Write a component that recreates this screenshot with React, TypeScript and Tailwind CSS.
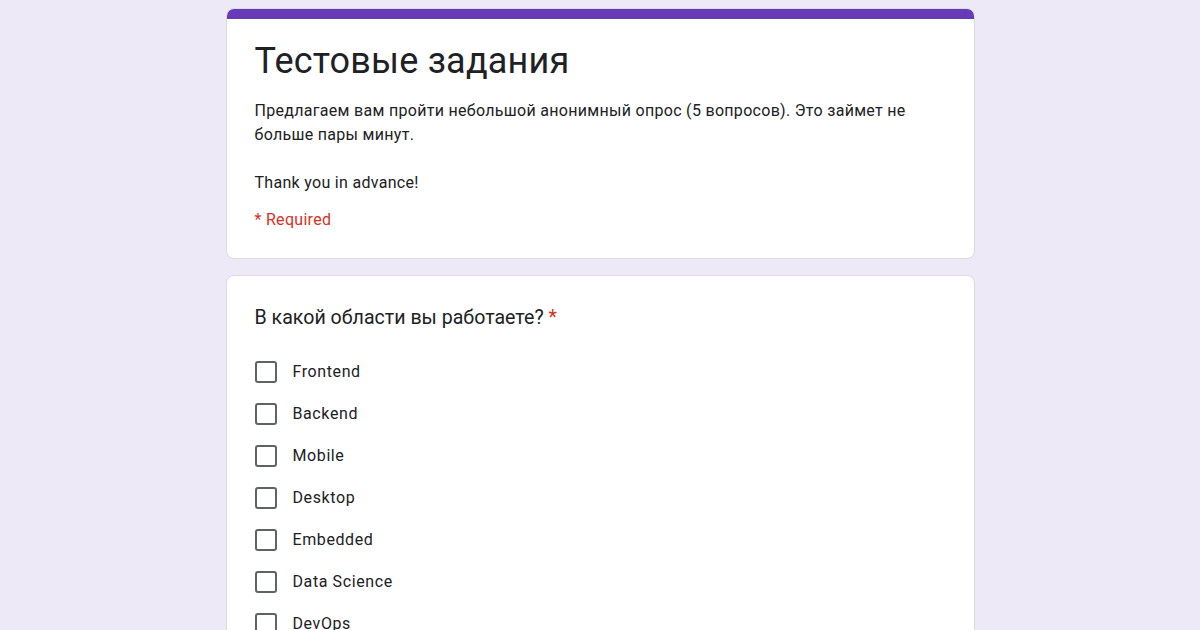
import { useState } from 'react';

const options = ['Frontend', 'Backend', 'Mobile', 'Desktop', 'Embedded', 'Data Science', 'DevOps'];

export default function App() {
  const [checked, setChecked] = useState<Record<string, boolean>>({});

  return (
    <div className="h-[630px] overflow-hidden bg-[#ede9f7] font-['Roboto',sans-serif]">
      <div className="w-[749px] mx-auto pt-[8px] flex flex-col gap-[16px]">
        {/* Header card */}
        <div className="bg-white rounded-[8px] border border-[#dadce0] overflow-hidden">
          <div className="h-[10px] bg-[#673ab7]" />
          <div className="pl-[28px] pr-[24px] pt-[20px] pb-[26px]">
            <h1 className="text-[36px] leading-[44px] text-[#202124] tracking-[0.2px] font-normal">
              Тестовые задания
            </h1>
            <p className="mt-[16px] text-[16px] leading-[24px] text-[#202124] tracking-[0.3px]">
              Предлагаем вам пройти небольшой анонимный опрос (5 вопросов). Это займет не больше пары минут.
            </p>
            <p className="mt-[24px] text-[16px] leading-[24px] text-[#202124] tracking-[0.3px]">
              Thank you in advance!
            </p>
            <p className="mt-[13px] text-[16px] leading-[24px] text-[#d93025] tracking-[0.3px]">* Required</p>
          </div>
        </div>

        {/* Question card */}
        <div className="bg-white rounded-[8px] border border-[#dadce0] pl-[28px] pr-[24px] pt-[29px] pb-[24px]">
          <div className="text-[19.6px] leading-[26px] text-[#202124]">
            В какой области вы работаете? <span className="text-[#d93025]">*</span>
          </div>
          <div className="mt-[20px] flex flex-col">
            {options.map((opt) => (
              <label key={opt} className="flex items-center h-[42px] cursor-pointer">
                <span
                  onClick={() => setChecked({ ...checked, [opt]: !checked[opt] })}
                  className={`w-[22px] h-[22px] rounded-[3px] border-2 ${
                    checked[opt] ? 'border-[#673ab7] bg-[#673ab7]' : 'border-[#5f6368]'
                  }`}
                />
                <span className="ml-[16px] text-[16px] text-[#202124] tracking-[0.6px]">{opt}</span>
              </label>
            ))}
          </div>
        </div>
      </div>
    </div>
  );
}
